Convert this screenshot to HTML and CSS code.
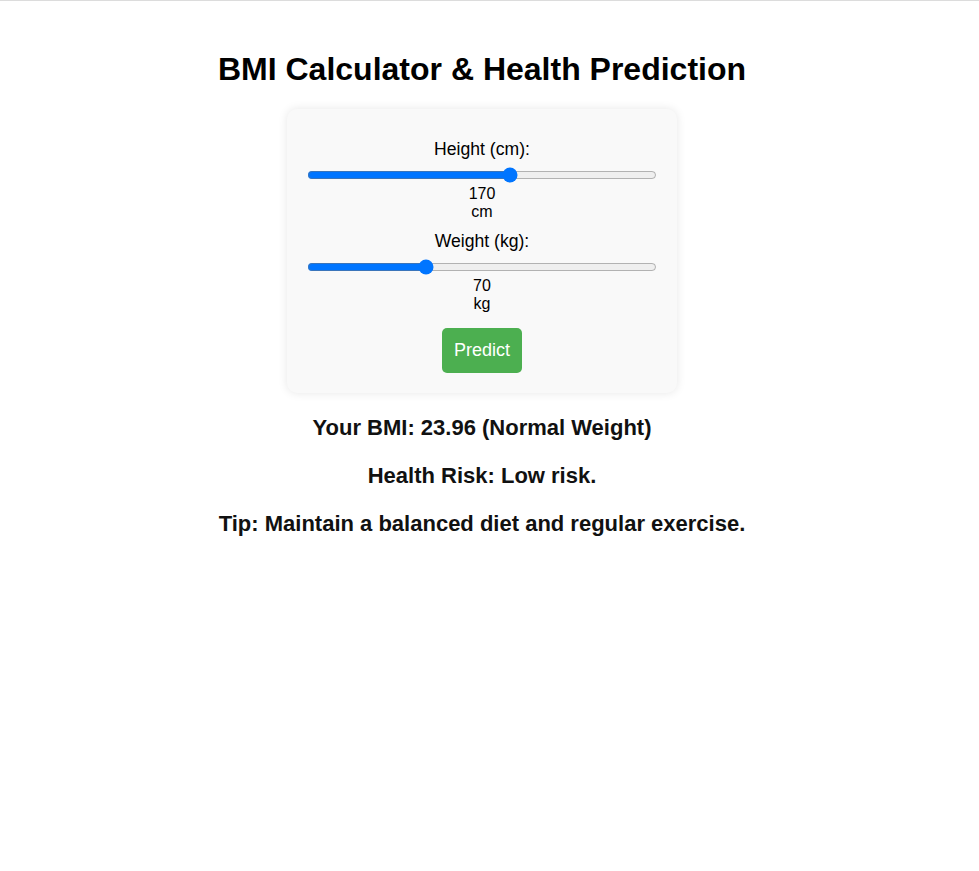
FILE: index.html
```html
<!DOCTYPE html>
<html lang="en">
<head>
<meta charset="utf-8">
<title>BMI Calculator & Health Prediction</title>
<link rel="stylesheet" href="styles.css">
</head>
<body>
<div class="topline"></div>
<main class="page">
  <h1 class="title">BMI Calculator &amp; Health Prediction</h1>
  <div class="card">
    <div class="group">
      <label class="label" for="height">Height (cm):</label>
      <input class="range" type="range" id="height" min="100" max="220" value="170">
      <div class="value">170</div>
      <div class="value">cm</div>
    </div>
    <div class="group">
      <label class="label" for="weight">Weight (kg):</label>
      <input class="range" type="range" id="weight" min="30" max="150" value="70">
      <div class="value">70</div>
      <div class="value">kg</div>
    </div>
    <button class="btn" type="button">Predict</button>
  </div>
  <div class="results">
    <p class="result">Your BMI: 23.96 (Normal Weight)</p>
    <p class="result">Health Risk: Low risk.</p>
    <p class="result">Tip: Maintain a balanced diet and regular exercise.</p>
  </div>
</main>
</body>
</html>
```
FILE: styles.css
```css
html, body {
  margin: 0;
  padding: 0;
  background: #ffffff;
}
body {
  font-family: "Liberation Sans", Arial, sans-serif;
  color: #000;
}
.topline {
  height: 1px;
  background: #dcdcdc;
}
.page {
  width: 964px;
  box-sizing: border-box;
  padding: 50px 20px 20px;
  text-align: center;
}
.title {
  font-size: 32px;
  font-weight: bold;
  margin: 0 0 21px;
  line-height: normal;
}
.card {
  width: 350px;
  margin: 0 auto;
  padding: 20px;
  background: #f9f9f9;
  border-radius: 10px;
  box-shadow: 0 0 10px rgba(0, 0, 0, 0.1);
}
.group {
  margin: 10px 0;
}
.label {
  display: block;
  font-size: 17.6px;
  line-height: normal;
  margin-bottom: 7px;
}
.range {
  display: block;
  width: 100%;
  margin: 2px 0;
  accent-color: #0075ff;
}
.value {
  font-size: 16px;
  line-height: normal;
}
.btn {
  display: block;
  margin: 15px auto 0;
  background: #4caf50;
  color: #fff;
  border: none;
  border-radius: 5px;
  font-family: "Liberation Sans", Arial, sans-serif;
  font-size: 18px;
  line-height: normal;
  padding: 12px;
  cursor: pointer;
}
.results {
  padding-top: 0.1px;
}
.result {
  font-size: 22px;
  font-weight: bold;
  color: #111;
  margin: 22px 0;
  line-height: normal;
}
```
